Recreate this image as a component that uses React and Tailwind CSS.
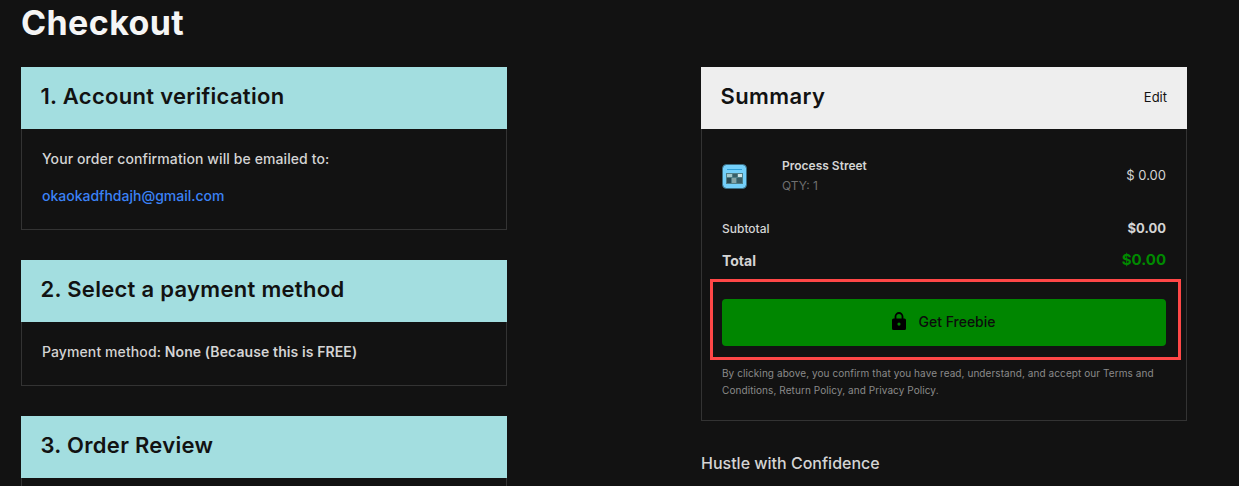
import React from 'react';

function SectionCard({ title, children, className }) {
  return (
    <section className={className}>
      <div className="h-[62px] bg-[#a3dee0] flex items-center pl-[19.5px] pr-5 pb-[4px]">
        <h2 className="text-[22px] tracking-[0.3px] font-semibold text-[#121212]">{title}</h2>
      </div>
      {children && (
        <div className="border border-t-0 border-[#333333] px-5">{children}</div>
      )}
    </section>
  );
}

// product thumbnail, a tiny browser window on a blue tile
function ProductIcon() {
  return (
    <svg width="25" height="25" viewBox="0 0 25 25">
      <rect x="0.5" y="0.5" width="24" height="24" rx="4" fill="#74d0fa" stroke="#3a6d82" />
      <rect x="5" y="5" width="15" height="1" fill="#2f9fd6" />
      <rect x="4" y="9" width="17" height="11" fill="#4f7f88" />
      <rect x="5" y="10" width="5" height="3" fill="#a4c8cc" />
      <rect x="11" y="10" width="4" height="3" fill="#3a5f68" />
      <rect x="16" y="10" width="4" height="3" fill="#cfe4e6" />
      <rect x="5" y="14" width="4" height="5" fill="#2a4a54" />
      <rect x="10" y="14" width="4" height="5" fill="#86a4a6" />
      <rect x="15" y="14" width="5" height="5" fill="#3a5f68" />
    </svg>
  );
}

function LockIcon() {
  return (
    <svg width="14" height="18" viewBox="0 0 14 18">
      <path d="M3.5 7V4.5a3.5 3.5 0 0 1 7 0V7" fill="none" stroke="#000" strokeWidth="1.8" />
      <path
        fillRule="evenodd"
        d="M1.5 6.5h11A1.5 1.5 0 0 1 14 8v8.5a1.5 1.5 0 0 1-1.5 1.5h-11A1.5 1.5 0 0 1 0 16.5V8a1.5 1.5 0 0 1 1.5-1.5zM7 10.5a1.6 1.6 0 1 0 0 3.2 1.6 1.6 0 0 0 0-3.2z"
        fill="#000"
      />
    </svg>
  );
}

export default function App() {
  return (
    <div className="relative h-[486px] overflow-hidden bg-[#121212] px-[21px] font-['Inter',sans-serif]">
      <h1 className="h-[67px] pt-[3px] text-[34px] tracking-[0.4px] leading-[40px] font-bold text-[#f5f5f5]">Checkout</h1>

      <div className="flex gap-[194px]">
        <div className="w-[486px] flex flex-col gap-[30px]">
          <SectionCard title="1. Account verification">
            <div className="h-[100px] pt-[20px] text-[14px] tracking-[0.1px] leading-[20px] font-medium">
              <p className="text-[#d4d4d4]">Your order confirmation will be emailed to:</p>
              <p className="mt-[17px] tracking-normal text-[#3b82f6]">okaokadfhdajh@gmail.com</p>
            </div>
          </SectionCard>

          <SectionCard title="2. Select a payment method">
            <div className="h-[63px] pt-[20px] text-[14px] tracking-[0.1px] leading-[20px] font-medium text-[#d4d4d4]">
              Payment method: <span className="font-semibold">None (Because this is FREE)</span>
            </div>
          </SectionCard>

          <SectionCard title="3. Order Review">
            <div className="h-[100px]" />
          </SectionCard>
        </div>

        <div className="w-[486px]">
          <div className="h-[62px] bg-[#eeeeee] flex items-center justify-between pl-[19.5px] pr-5 pb-[4px]">
            <h2 className="text-[22px] tracking-[0.4px] font-semibold text-[#121212]">Summary</h2>
            <span className="mt-[4px] text-[13px] text-[#121212]">Edit</span>
          </div>

          <div className="h-[292px] border border-t-0 border-[#333333] px-5 pt-[26px]">
            <div className="flex items-center justify-between h-[42px]">
              <div className="flex items-center">
                <ProductIcon />
                <div className="ml-[35px]">
                  <p className="text-[12px] leading-[20px] font-semibold text-[#d4d4d4]">Process Street</p>
                  <p className="text-[12px] leading-[20px] text-[#6f6f6f]">QTY: 1</p>
                </div>
              </div>
              <span className="text-[13px] text-[#d4d4d4]">$ 0.00</span>
            </div>

            <div className="mt-[22px] flex justify-between items-center h-[20px] text-[#d4d4d4]">
              <span className="text-[12px] font-medium">Subtotal</span>
              <span className="text-[13px] font-bold">$0.00</span>
            </div>
            <div className="mt-[11px] flex justify-between items-center h-[20px]">
              <span className="text-[14px] font-bold text-[#d4d4d4]">Total</span>
              <span className="text-[15px] font-bold text-[#008a00]">$0.00</span>
            </div>

            <button className="mt-[29px] w-full h-[47px] pb-[3px] rounded-[4px] bg-[#008600] flex items-center justify-center gap-[12px] text-[14px] font-medium text-[#0c0c0c]">
              <LockIcon />
              Get Freebie
            </button>

            <p className="mt-[19px] text-[10px] tracking-[0.08px] leading-[17px] text-[#8a8a8a]">
              By clicking above, you confirm that you have read, understand, and accept our Terms and Conditions, Return Policy, and Privacy Policy.
            </p>
          </div>

          <h3 className="mt-[32px] text-[16px] leading-[20px] font-medium text-[#d4d4d4]">Hustle with Confidence</h3>
        </div>
      </div>

      {/* red annotation box drawn over the button */}
      <div className="absolute left-[710px] top-[279px] w-[471px] h-[81px] border-[3px] border-[#ff4747]" />
    </div>
  );
}
